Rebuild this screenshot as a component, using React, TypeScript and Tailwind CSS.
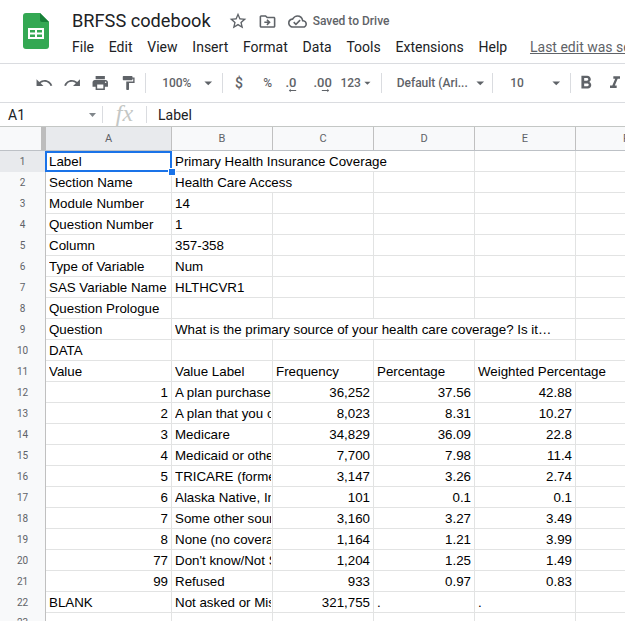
import { MdStarBorder, MdOutlineDriveFileMove, MdOutlineCloudDone, MdUndo, MdRedo, MdPrint, MdFormatPaint, MdFormatBold, MdFormatItalic, MdArrowDropDown, MdArrowRightAlt } from "react-icons/md";

type Cell = { t?: string; span?: number; right?: boolean };

const columns = ["A", "B", "C", "D", "E", "F"];

const rows: Cell[][] = [
  [{ t: "Label" }, { t: "Primary Health Insurance Coverage", span: 3 }, {}, {}],
  [{ t: "Section Name" }, { t: "Health Care Access", span: 2 }, {}, {}, {}],
  [{ t: "Module Number" }, { t: "14" }, {}, {}, {}, {}],
  [{ t: "Question Number" }, { t: "1" }, {}, {}, {}, {}],
  [{ t: "Column" }, { t: "357-358" }, {}, {}, {}, {}],
  [{ t: "Type of Variable" }, { t: "Num" }, {}, {}, {}, {}],
  [{ t: "SAS Variable Name" }, { t: "HLTHCVR1" }, {}, {}, {}, {}],
  [{ t: "Question Prologue" }, {}, {}, {}, {}, {}],
  [{ t: "Question" }, { t: "What is the primary source of your health care coverage? Is it…", span: 4 }, {}],
  [{ t: "DATA" }, {}, {}, {}, {}, {}],
  [{ t: "Value" }, { t: "Value Label" }, { t: "Frequency" }, { t: "Percentage" }, { t: "Weighted Percentage", span: 2 }],
  [{ t: "1", right: true }, { t: "A plan purchased through an employer" }, { t: "36,252", right: true }, { t: "37.56", right: true }, { t: "42.88", right: true }, {}],
  [{ t: "2", right: true }, { t: "A plan that you or another family member" }, { t: "8,023", right: true }, { t: "8.31", right: true }, { t: "10.27", right: true }, {}],
  [{ t: "3", right: true }, { t: "Medicare" }, { t: "34,829", right: true }, { t: "36.09", right: true }, { t: "22.8", right: true }, {}],
  [{ t: "4", right: true }, { t: "Medicaid or other state program" }, { t: "7,700", right: true }, { t: "7.98", right: true }, { t: "11.4", right: true }, {}],
  [{ t: "5", right: true }, { t: "TRICARE (formerly CHAMPUS)" }, { t: "3,147", right: true }, { t: "3.26", right: true }, { t: "2.74", right: true }, {}],
  [{ t: "6", right: true }, { t: "Alaska Native, Indian Health Service" }, { t: "101", right: true }, { t: "0.1", right: true }, { t: "0.1", right: true }, {}],
  [{ t: "7", right: true }, { t: "Some other source" }, { t: "3,160", right: true }, { t: "3.27", right: true }, { t: "3.49", right: true }, {}],
  [{ t: "8", right: true }, { t: "None (no coverage)" }, { t: "1,164", right: true }, { t: "1.21", right: true }, { t: "3.99", right: true }, {}],
  [{ t: "77", right: true }, { t: "Don't know/Not Sure" }, { t: "1,204", right: true }, { t: "1.25", right: true }, { t: "1.49", right: true }, {}],
  [{ t: "99", right: true }, { t: "Refused" }, { t: "933", right: true }, { t: "0.97", right: true }, { t: "0.83", right: true }, {}],
  [{ t: "BLANK" }, { t: "Not asked or Missing" }, { t: "321,755", right: true }, { t: "." }, { t: "." }, {}],
  [{}, {}, {}, {}, {}, {}],
];

const gridCols = "grid grid-cols-[46px_126px_101px_101px_101px_101px_101px] w-[677px]";

const Divider = () => <div className="w-px h-5 bg-[#dadce0] shrink-0" />;

export default function App() {
  return (
    <div className="w-[625px] h-[621px] overflow-hidden bg-white font-['Roboto',sans-serif] text-[#202124]">
      {/* title and menus */}
      <div className="h-[64px] flex border-b border-[#dadce0]">
        <div className="w-[72px] shrink-0 pl-[23px] pt-[13px]">
          <svg width="26" height="36" viewBox="0 0 26 36">
            <path d="M3 0h14l9 9v24a3 3 0 0 1-3 3H3a3 3 0 0 1-3-3V3a3 3 0 0 1 3-3z" fill="#34a853" />
            <path d="M17 0l9 9h-7a2 2 0 0 1-2-2z" fill="#188038" />
            <path d="M5 15h16v11H5z M7 17v2.500h5V17z M14 17v2.500h5V17z M7 21.500V24h5v-2.500z M14 21.500V24h5v-2.500z" fill="#fff" fillRule="evenodd" />
          </svg>
        </div>
        <div className="flex-1 min-w-0">
          <div className="h-[28px] pt-[14px] flex items-center whitespace-nowrap">
            <span className="text-[18.200px] leading-6">BRFSS codebook</span>
            <MdStarBorder className="ml-[17px] text-[#5f6368]" size={20} />
            <MdOutlineDriveFileMove className="ml-[10px] text-[#5f6368]" size={19} />
            <MdOutlineCloudDone className="ml-[11px] text-[#5f6368]" size={19} />
            <span className="ml-[6px] text-[12px] font-medium text-[#5f6368]">Saved to Drive</span>
          </div>
          <div className="mt-[9px] flex items-center whitespace-nowrap text-[14px] leading-5 gap-[14.800px]">
            <span>File</span>
            <span>Edit</span>
            <span>View</span>
            <span>Insert</span>
            <span>Format</span>
            <span>Data</span>
            <span>Tools</span>
            <span>Extensions</span>
            <span>Help</span>
            <span className="ml-[8px] underline text-[#5f6368]">Last edit was seconds ago</span>
          </div>
        </div>
      </div>

      {/* toolbar */}
      <div className="h-[39px] flex items-center pl-[35px] border-b border-[#dadce0] text-[#5f6368] whitespace-nowrap">
        <MdUndo size={20} />
        <MdRedo size={20} className="ml-[9px]" />
        <MdPrint size={20} className="ml-[10px]" />
        <MdFormatPaint size={18} className="ml-[10px]" />
        <div className="ml-[9px]"><Divider /></div>
        <span className="ml-[16px] text-[12px] font-medium w-[30px]">100%</span>
        <MdArrowDropDown size={20} className="ml-[8px]" />
        <div className="ml-[4px]"><Divider /></div>
        <span className="ml-[12px] text-[14px] font-medium w-[10px]">$</span>
        <span className="ml-[19px] text-[12px] font-medium w-[11px]">%</span>
        <span className="relative ml-[12px] text-[13px] font-medium w-[11px]">
          .0
          <MdArrowRightAlt size={11} className="absolute left-[2px] top-[12px] rotate-180" />
        </span>
        <span className="relative ml-[17px] text-[13px] font-medium w-[17px]">
          .00
          <MdArrowRightAlt size={11} className="absolute left-[7px] top-[12px]" />
        </span>
        <span className="ml-[10px] text-[12px] font-medium">123</span>
        <MdArrowDropDown size={16} className="-ml-[1px]" />
        <div className="ml-[6px]"><Divider /></div>
        <span className="ml-[15px] text-[12px] font-medium w-[72px]">Default (Ari...</span>
        <MdArrowDropDown size={20} className="ml-[3px]" />
        <div className="ml-[3px]"><Divider /></div>
        <span className="ml-[17px] text-[12px] font-medium w-[24px]">10</span>
        <MdArrowDropDown size={20} className="ml-[15px]" />
        <div className="ml-[4px]"><Divider /></div>
        <MdFormatBold size={22} className="ml-[4px] shrink-0" />
        <MdFormatItalic size={20} className="ml-[8px] shrink-0" />
      </div>

      {/* formula bar */}
      <div className="h-[24px] flex items-center border-b border-[#c4c7c5] text-[14px] whitespace-nowrap">
        <span className="w-[89px] pl-2 leading-none">A1</span>
        <svg width="8" height="4" viewBox="0 0 8 4" className="text-[#80868b]"><path d="M0 0h7L3.500 4z" fill="currentColor" /></svg>
        <div className="ml-[5px] w-px h-[17px] bg-[#dadce0]" />
        <span className="w-[43px] pb-[3px] text-center font-['Liberation_Serif',serif] italic text-[24px] leading-none text-[#c4c7c5]">fx</span>
        <div className="w-px h-[17px] bg-[#dadce0]" />
        <span className="ml-[11px] leading-none">Label</span>
      </div>

      {/* sheet */}
      <div className="relative font-['Liberation_Sans',sans-serif] text-[13.330px] leading-[20px] text-black">
        <div className={`${gridCols} h-[24px] font-['Roboto',sans-serif] text-[11px] text-[#5f6368] border-b border-[#bdc1c6]`}>
          <div className="bg-[#f8f9fa] border-r-[5px] border-[#bdbdbd]" />
          {columns.map((c, i) => (
            <div
              key={c}
              className={`flex items-center justify-center border-r border-[#c0c0c0] ${i === 0 ? "bg-[#e8eaed]" : "bg-[#f8f9fa]"}`}
            >
              {c}
            </div>
          ))}
        </div>

        {rows.map((row, i) => (
          <div key={i} className={`${gridCols} h-[21px] border-b border-[#e2e3e3]`}>
            <div
              className={`flex items-center justify-center border-r border-[#c0c0c0] font-['Roboto',sans-serif] text-[10px] text-[#5f6368] ${i === 0 ? "bg-[#e8eaed]" : "bg-[#f8f9fa]"}`}
            >
              {i + 1}
            </div>
            {row.map((cell, j) => (
              <div
                key={j}
                style={cell.span ? { gridColumn: `span ${cell.span}` } : undefined}
                className="pl-[3px] pr-px pt-px border-r border-[#e2e3e3] min-w-0"
              >
                <div className={`pr-[2px] overflow-hidden whitespace-nowrap ${cell.right ? "text-right" : ""}`}>
                  {cell.t}
                </div>
              </div>
            ))}
          </div>
        ))}

        {/* A1 selection */}
        <div className="absolute left-[45px] top-[24px] w-[127px] h-[21px] border-2 border-[#1a73e8] pointer-events-none" />
        <div className="absolute left-[168px] top-[41px] w-[6px] h-[6px] bg-[#1a73e8] border border-white box-content pointer-events-none" />
      </div>
    </div>
  );
}
